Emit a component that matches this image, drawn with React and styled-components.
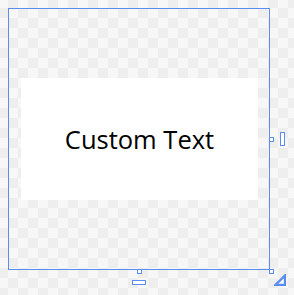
import React from 'react';
import styled, { createGlobalStyle } from 'styled-components';

const Global = createGlobalStyle`
  html, body { margin: 0; padding: 0; }
  body { font-family: "Open Sans", "Noto Sans", sans-serif; }
`;

const BLUE = '#5b8def';

const Canvas = styled.div`
  width: 294px;
  height: 295px;
  box-sizing: border-box;
  padding: 8px;
  background-color: #f7f7f7;
  background-image: conic-gradient(#eeeeee 25%, transparent 0 50%, #eeeeee 0 75%, transparent 0);
  background-size: 20px 20px;
  background-position: -2px -2px;
`;

const Frame = styled.div`
  position: relative;
  width: 262px;
  height: 262px;
  box-sizing: border-box;
  border: 1px solid ${BLUE};
  padding: 0 0 1px 1px;
  display: flex;
  align-items: center;
  justify-content: center;
`;

const Card = styled.div`
  width: 237px;
  height: 122px;
  background: #ffffff;
  display: flex;
  align-items: center;
  justify-content: center;
  font-size: 25.5px;
  color: #000;
`;

/* selection handles sit over the frame's edges */
const RightRail = styled.div`
  position: absolute;
  left: 100%;
  top: 0;
  bottom: 0;
  display: flex;
  align-items: center;
  gap: 6px;
`;

const BottomRail = styled.div`
  position: absolute;
  top: 100%;
  left: 0;
  right: 0;
  display: flex;
  flex-direction: column;
  align-items: center;
  gap: 6px;
`;

const Corner = styled.div`
  position: absolute;
  left: 100%;
  top: 100%;
  display: grid;
  grid-template-columns: 5px 12px;
  grid-template-rows: 5px 12px;
`;

const Knob = styled.div`
  box-sizing: border-box;
  width: 5px;
  height: 5px;
  border: 1px solid ${BLUE};
  background: #fff;
`;

const Bar = styled.div`
  box-sizing: border-box;
  border: 1px solid ${BLUE};
  background: #fff;
  width: ${(p) => (p.$vertical ? 5 : 14)}px;
  height: ${(p) => (p.$vertical ? 14 : 5)}px;
`;

const Grip = styled.svg`
  grid-area: 2 / 2;
`;

export default function App() {
  return (
    <>
      <Global />
      <Canvas>
        <Frame>
          <Card>Custom Text</Card>
          <RightRail>
            <Knob />
            <Bar $vertical />
          </RightRail>
          <BottomRail>
            <Knob />
            <Bar />
          </BottomRail>
          <Corner>
            <Knob />
            <Grip width="12" height="12" viewBox="0 0 12 12">
              <path d="M11 1.5 L11 11 L1.5 11 Z" fill="#fff" stroke={BLUE} strokeWidth="2.4" />
            </Grip>
          </Corner>
        </Frame>
      </Canvas>
    </>
  );
}
